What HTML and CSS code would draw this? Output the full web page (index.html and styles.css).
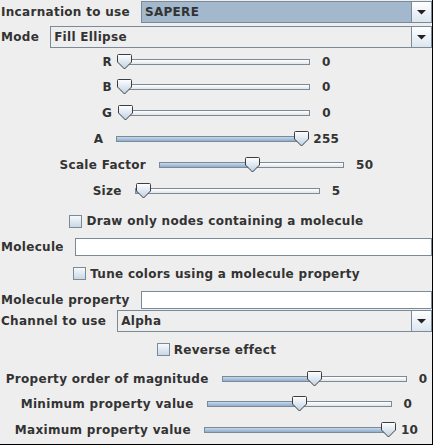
FILE: index.html
```html
<!DOCTYPE html>
<html>
<head>
<meta charset="utf-8">
<link rel="stylesheet" href="styles.css">
</head>
<body>
<div class="panel">
  <div class="row form r1">
    <span class="lbl">Incarnation to use</span>
    <div class="combo combo-sel">
      <span class="combo-text">SAPERE</span>
      <span class="combo-btn"><svg width="9" height="5" viewBox="0 0 9 5"><polygon points="0,0 9,0 4.5,4.5" fill="#222"/></svg></span>
    </div>
  </div>
  <div class="row form r2">
    <span class="lbl">Mode</span>
    <div class="combo">
      <span class="combo-text">Fill Ellipse</span>
      <span class="combo-btn"><svg width="9" height="5" viewBox="0 0 9 5"><polygon points="0,0 9,0 4.5,4.5" fill="#222"/></svg></span>
    </div>
  </div>

  <div class="row srow r3">
    <span class="lbl">R</span>
    <div class="slider" style="--f:0"><div class="track"><div class="fill"></div></div><svg class="thumb" width="15" height="16" viewBox="0 0 15 16"><use href="#th"/></svg></div>
    <span class="val">0</span>
  </div>
  <div class="row srow r4">
    <span class="lbl">B</span>
    <div class="slider" style="--f:0"><div class="track"><div class="fill"></div></div><svg class="thumb" width="15" height="16" viewBox="0 0 15 16"><use href="#th"/></svg></div>
    <span class="val">0</span>
  </div>
  <div class="row srow r5">
    <span class="lbl">G</span>
    <div class="slider" style="--f:0"><div class="track"><div class="fill"></div></div><svg class="thumb" width="15" height="16" viewBox="0 0 15 16"><use href="#th"/></svg></div>
    <span class="val">0</span>
  </div>
  <div class="row srow r6">
    <span class="lbl">A</span>
    <div class="slider" style="--f:1"><div class="track"><div class="fill"></div></div><svg class="thumb" width="15" height="16" viewBox="0 0 15 16"><use href="#th"/></svg></div>
    <span class="val">255</span>
  </div>
  <div class="row srow r7">
    <span class="lbl">Scale Factor</span>
    <div class="slider" style="--f:0.505"><div class="track"><div class="fill"></div></div><svg class="thumb" width="15" height="16" viewBox="0 0 15 16"><use href="#th"/></svg></div>
    <span class="val">50</span>
  </div>
  <div class="row srow r8">
    <span class="lbl">Size</span>
    <div class="slider" style="--f:0.05"><div class="track"><div class="fill"></div></div><svg class="thumb" width="15" height="16" viewBox="0 0 15 16"><use href="#th"/></svg></div>
    <span class="val">5</span>
  </div>

  <div class="row crow r9">
    <span class="check"></span>
    <span class="lbl">Draw only nodes containing a molecule</span>
  </div>
  <div class="row form r10">
    <span class="lbl">Molecule</span>
    <div class="field"></div>
  </div>
  <div class="row crow r11">
    <span class="check"></span>
    <span class="lbl">Tune colors using a molecule property</span>
  </div>
  <div class="row form r12">
    <span class="lbl">Molecule property</span>
    <div class="field"></div>
  </div>
  <div class="row form r13">
    <span class="lbl">Channel to use</span>
    <div class="combo">
      <span class="combo-text">Alpha</span>
      <span class="combo-btn"><svg width="9" height="5" viewBox="0 0 9 5"><polygon points="0,0 9,0 4.5,4.5" fill="#222"/></svg></span>
    </div>
  </div>
  <div class="row crow r14">
    <span class="check"></span>
    <span class="lbl">Reverse effect</span>
  </div>

  <div class="row srow r15">
    <span class="lbl">Property order of magnitude</span>
    <div class="slider" style="--f:0.5"><div class="track"><div class="fill"></div></div><svg class="thumb" width="15" height="16" viewBox="0 0 15 16"><use href="#th"/></svg></div>
    <span class="val">0</span>
  </div>
  <div class="row srow r16">
    <span class="lbl">Minimum property value</span>
    <div class="slider" style="--f:0.5"><div class="track"><div class="fill"></div></div><svg class="thumb" width="15" height="16" viewBox="0 0 15 16"><use href="#th"/></svg></div>
    <span class="val">0</span>
  </div>
  <div class="row srow r17">
    <span class="lbl">Maximum property value</span>
    <div class="slider" style="--f:1"><div class="track"><div class="fill"></div></div><svg class="thumb" width="15" height="16" viewBox="0 0 15 16"><use href="#th"/></svg></div>
    <span class="val">10</span>
  </div>
</div>

<svg width="0" height="0" class="defs">
  <defs>
    <linearGradient id="tg" x1="0" y1="0" x2="0" y2="1">
      <stop offset="0" stop-color="#ffffff"/>
      <stop offset="1" stop-color="#bcd0e4"/>
    </linearGradient>
    <g id="th">
      <path d="M1.5 0.5 H13.5 Q14.5 0.5 14.5 1.5 V8 L7.5 15 L0.5 8 V1.5 Q0.5 0.5 1.5 0.5 Z" fill="url(#tg)" stroke="#3d3d3d" stroke-width="1"/>
    </g>
  </defs>
</svg>
</body>
</html>
```

FILE: styles.css
```css
* { box-sizing: border-box; }
html, body { margin: 0; padding: 0; }
body {
  width: 433px;
  height: 445px;
  background: #000;
  font: bold 12px "DejaVu Sans", sans-serif;
  letter-spacing: 0.3px;
  color: #333333;
  overflow: hidden;
}
.defs { position: absolute; }
.panel {
  width: 432px;
  height: 444px;
  background: #eeeeee;
  padding-left: 1px;
  display: flex;
  flex-direction: column;
}
.row { display: flex; align-items: center; flex: none; white-space: nowrap; }
.form { gap: 11px; }
.srow { justify-content: center; gap: 5px; }
.crow { justify-content: center; gap: 4px; }

.r1 { height: 24px; }
.r2 { height: 26px; }
.r3 { height: 24px; }
.r4 { height: 26px; }
.r5 { height: 25px; }
.r6 { height: 28px; }
.r7 { height: 24px; }
.r8 { height: 28px; }
.r9 { height: 32px; }
.r10 { height: 20px; }
.r11 { height: 33px; }
.r12 { height: 19px; }
.r13 { height: 24px; }
.r14 { height: 33px; }
.r15 { height: 25px; }
.r16 { height: 26px; }
.r17 { height: 26px; }

/* combo box */
.combo {
  flex: 1;
  height: 22px;
  border: 1px solid #7a8a99;
  background: #eeeeee;
  display: flex;
}
.combo-text {
  flex: 1;
  display: flex;
  align-items: center;
  padding-left: 3px;
}
.combo-sel .combo-text { background: #a3b8cc; }
.combo-btn {
  width: 20px;
  border-left: 1px solid #7a8a99;
  background: linear-gradient(#ffffff, #dce6f0);
  display: flex;
  align-items: center;
  justify-content: center;
}

/* text field */
.field {
  flex: 1;
  height: 18px;
  border: 1px solid #7a8a99;
  background: #ffffff;
}

/* checkbox */
.check {
  width: 13px;
  height: 13px;
  border: 1px solid #7a8a99;
  background: linear-gradient(#f6f9fc, #c9d7e5);
}

/* slider */
.slider {
  position: relative;
  width: 200px;
  height: 16px;
  padding: 5px 7px 0 8px;
}
.track {
  height: 6px;
  border: 1px solid #7a8a99;
  background: linear-gradient(#ffffff, #e4e4e4);
  display: flex;
}
.fill {
  width: calc(var(--f) * 100%);
  background: linear-gradient(#c7d8ea, #8eaecd);
}
.thumb {
  position: absolute;
  top: 0;
  left: calc(var(--f) * 185px + 0.5px);
  display: block;
}
```
